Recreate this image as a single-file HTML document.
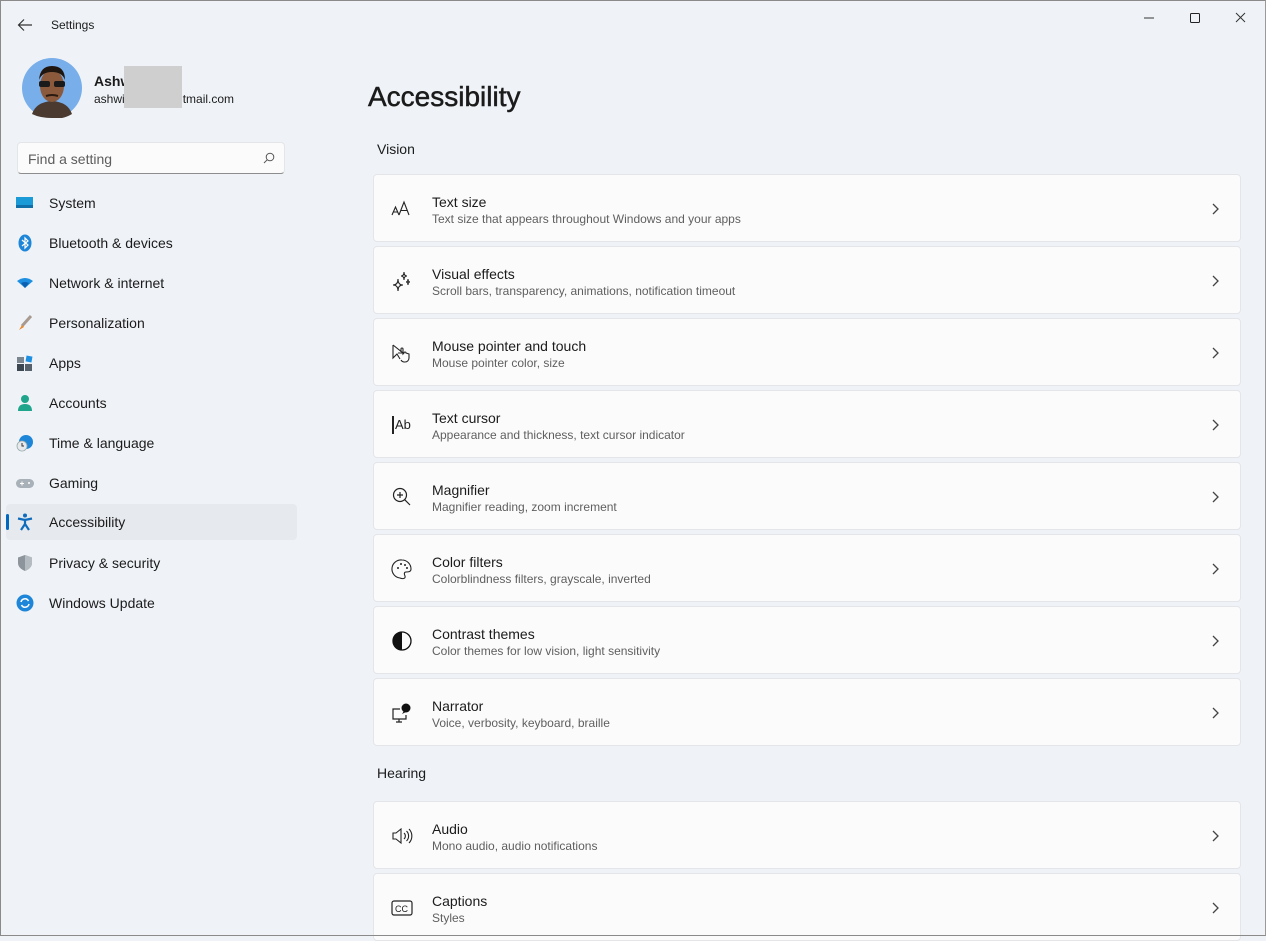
<!DOCTYPE html>
<html><head><meta charset="utf-8"><style>
*{margin:0;padding:0;box-sizing:border-box}
body{width:1266px;height:936px;overflow:hidden;background:#eff3f7;font-family:"Liberation Sans",sans-serif;color:#1b1b1b;position:relative}
.frame{position:absolute;inset:0;border:1px solid #8a8a8a;border-right-color:#9a9a9a;pointer-events:none}
.abs{position:absolute}
.nav{position:absolute;left:6px;width:291px;height:36px;display:flex;align-items:center;font-size:14px;color:#1b1b1b}
.nav .ic{position:absolute;left:10px;top:9px;width:18px;height:18px}
.nav span.t{position:absolute;left:43px}
.sel{background:#e6e9ed;border-radius:4px}
.sel:before{content:"";position:absolute;left:0;top:10px;width:3px;height:16px;background:#0067c0;border-radius:2px}
.card{position:absolute;left:373px;width:868px;height:68px;background:#fbfbfc;border:1px solid #e3e5e8;border-radius:4px}
.card .ti{position:absolute;left:58px;top:19px;font-size:14px;color:#1b1b1b}
.card .su{position:absolute;left:58px;top:37px;font-size:12px;color:#5f5f5f}
.card .ic{position:absolute;left:17px;top:23px;width:22px;height:22px}
.card .ch{position:absolute;right:20px;top:28px;width:10px;height:12px}
.sec{position:absolute;left:377px;font-size:14px;color:#1b1b1b}
</style></head><body>
<svg class="abs" style="left:17px;top:18px" width="16" height="14" viewBox="0 0 16 14"><path d="M15 7H2M7 1.5L1.5 7 7 12.5" fill="none" stroke="#333" stroke-width="1.2"/></svg>
<div class="abs" style="left:51px;top:18px;font-size:12px">Settings</div>
<svg class="abs" style="left:1143px;top:10px" width="110" height="16" viewBox="0 0 110 16"><path d="M1 8h10" stroke="#333" stroke-width="1"/><rect x="47.5" y="3.5" width="9" height="9" rx="1" fill="none" stroke="#222" stroke-width="1"/><path d="M93 3l9 9M102 3l-9 9" stroke="#333" stroke-width="1"/></svg>
<svg class="abs" style="left:22px;top:58px" width="60" height="60" viewBox="0 0 60 60"><circle cx="30" cy="30" r="30" fill="#78aeea"/><path d="M10 56 Q14 44 30 43 Q46 44 50 56 Q40 62 30 60 Q18 60 10 56Z" fill="#4a3a30"/><ellipse cx="30" cy="28" rx="12" ry="16" fill="#8b5a3c"/><path d="M17 22 Q18 8 30 8 Q43 8 43 22 Q40 14 30 14 Q20 14 17 22Z" fill="#1f1610"/><rect x="17" y="23" width="11" height="6" rx="2" fill="#1a1a1a"/><rect x="32" y="23" width="11" height="6" rx="2" fill="#1a1a1a"/><path d="M24 38 Q30 36 36 38" stroke="#2a1a10" stroke-width="2" fill="none"/></svg>
<div class="abs" style="left:94px;top:73px;font-size:14px;font-weight:bold">Ashw</div>
<div class="abs" style="left:94px;top:92px;font-size:12px">ashwi<span style="display:inline-block;width:58px"></span>tmail.com</div>
<div class="abs" style="left:124px;top:66px;width:58px;height:42px;background:#cfcfcf"></div>
<div class="abs" style="left:17px;top:142px;width:268px;height:32px;background:#fbfbfc;border:1px solid #e3e5e8;border-bottom:1px solid #8d8d8d;border-radius:4px"><span style="position:absolute;left:10px;top:8px;font-size:14px;color:#5d5d5d">Find a setting</span><svg style="position:absolute;right:9px;top:9px" width="12" height="12" viewBox="0 0 12 12"><circle cx="7" cy="5" r="3.8" fill="none" stroke="#555" stroke-width="1"/><path d="M4.3 7.7L1 11" stroke="#555"/></svg></div>

<div class="nav" style="top:185px"><svg class="ic" viewBox="0 0 18 18"><rect x="0" y="3" width="17" height="11" fill="#1a9ad6"/><rect x="0" y="11" width="17" height="3" fill="#0f6fa8"/></svg><span class="t">System</span></div>
<div class="nav" style="top:225px"><svg class="ic" viewBox="0 0 18 18"><ellipse cx="9" cy="9" rx="6.5" ry="8.5" fill="#1e86d8"/><path d="M6 6l6 5-3 3V4l3 3-6 5" fill="none" stroke="#fff" stroke-width="1.2"/></svg><span class="t">Bluetooth &amp; devices</span></div>
<div class="nav" style="top:265px"><svg class="ic" viewBox="0 0 18 18"><path d="M1 7 Q9 1 17 7 L9 14Z" fill="#1e8fe0"/><path d="M5 9 Q9 7 13 9 L9 14Z" fill="#0b5fb0"/></svg><span class="t">Network &amp; internet</span></div>
<div class="nav" style="top:305px"><svg class="ic" viewBox="0 0 18 18"><path d="M15 2L6 12" stroke="#a89a90" stroke-width="3"/><path d="M6 11 L3 16 L8 13Z" fill="#e8892a"/></svg><span class="t">Personalization</span></div>
<div class="nav" style="top:345px"><svg class="ic" viewBox="0 0 18 18"><rect x="1" y="3" width="7" height="6" fill="#7a8590"/><rect x="1" y="10" width="7" height="7" fill="#3c4650"/><rect x="9" y="10" width="7" height="7" fill="#56616b"/><rect x="10" y="2" width="6" height="6" fill="#1e8fe0" transform="rotate(10 13 5)"/></svg><span class="t">Apps</span></div>
<div class="nav" style="top:385px"><svg class="ic" viewBox="0 0 18 18"><circle cx="9" cy="5" r="4" fill="#1fa58c"/><path d="M2 17 Q2 10 9 10 Q16 10 16 17Z" fill="#1fa58c"/></svg><span class="t">Accounts</span></div>
<div class="nav" style="top:425px"><svg class="ic" viewBox="0 0 18 18"><circle cx="10" cy="8" r="7" fill="#1e86d8"/><circle cx="6" cy="12" r="5" fill="#e7eaed" stroke="#9aa" stroke-width=".8"/><path d="M6 9v3h2" stroke="#333" fill="none"/></svg><span class="t">Time &amp; language</span></div>
<div class="nav" style="top:465px"><svg class="ic" viewBox="0 0 18 18"><rect x="0" y="5" width="18" height="9" rx="4.5" fill="#a8b0b8"/><path d="M4 9.5h4M6 7.5v4" stroke="#fff"/><circle cx="13" cy="9" r="1" fill="#fff"/></svg><span class="t">Gaming</span></div>
<div class="nav sel" style="top:504px"><svg class="ic" viewBox="0 0 18 18"><circle cx="9" cy="2.5" r="2" fill="#0f6cbd"/><path d="M2 5.5L9 7l7-1.5M9 7v4l-4 6M9 11l4 6" fill="none" stroke="#0f6cbd" stroke-width="2.2"/></svg><span class="t">Accessibility</span></div>
<div class="nav" style="top:545px"><svg class="ic" viewBox="0 0 18 18"><path d="M9 1 L16 3.5 V9 Q16 14 9 17 Q2 14 2 9 V3.5Z" fill="#8d949b"/><path d="M9 1 L16 3.5 V9 Q16 14 9 17Z" fill="#b4bbc1"/></svg><span class="t">Privacy &amp; security</span></div>
<div class="nav" style="top:585px"><svg class="ic" viewBox="0 0 18 18"><circle cx="9" cy="9" r="8.5" fill="#1e86d8"/><path d="M5 8 A4 4 0 0 1 12.5 7M13 10 A4 4 0 0 1 5.5 11" fill="none" stroke="#fff" stroke-width="1.5"/></svg><span class="t">Windows Update</span></div>

<div class="abs" style="left:368px;top:81px;font-size:28px;font-weight:normal;-webkit-text-stroke:0.5px #1b1b1b">Accessibility</div>
<div class="sec" style="top:141px">Vision</div>

<div class="card" style="top:174px"><svg class="ic" viewBox="0 0 22 22"><path d="M1 17l3.5-8 3.5 8M2.3 14h4.4M8 17l5-13 5 13M9.8 12.5h6.4" fill="none" stroke="#222" stroke-width="1.1"/></svg><div class="ti">Text size</div><div class="su">Text size that appears throughout Windows and your apps</div><svg class="ch" viewBox="0 0 10 12"><path d="M3 1l5 5-5 5" fill="none" stroke="#444" stroke-width="1.3"/></svg></div>
<div class="card" style="top:246px"><svg class="ic" viewBox="0 0 22 22"><path d="M7 9 Q7 15 2 15 Q7 15 7 21 Q7 15 12 15 Q7 15 7 9Z M13 2 Q13 6 10 6 Q13 6 13 10 Q13 6 16 6 Q13 6 13 2Z M17 9 Q17 12 15 12 Q17 12 17 15 Q17 12 19 12 Q17 12 17 9Z" fill="none" stroke="#222" stroke-width="1.1"/></svg><div class="ti">Visual effects</div><div class="su">Scroll bars, transparency, animations, notification timeout</div><svg class="ch" viewBox="0 0 10 12"><path d="M3 1l5 5-5 5" fill="none" stroke="#444" stroke-width="1.3"/></svg></div>
<div class="card" style="top:318px"><svg class="ic" viewBox="0 0 22 22"><path d="M2 3v13l4-4 3 5M2 3l10 8H7" fill="none" stroke="#222" stroke-width="1.1"/><path d="M10 10v-3a1 1 0 0 1 2 0v5l1-1a1 1 0 0 1 2 0l3 1v4a4 4 0 0 1-4 4h-1a4 4 0 0 1-3-2" fill="none" stroke="#222" stroke-width="1.1"/></svg><div class="ti">Mouse pointer and touch</div><div class="su">Mouse pointer color, size</div><svg class="ch" viewBox="0 0 10 12"><path d="M3 1l5 5-5 5" fill="none" stroke="#444" stroke-width="1.3"/></svg></div>
<div class="card" style="top:390px"><svg class="ic" viewBox="0 0 22 22"><path d="M2 2v18" stroke="#222" stroke-width="2"/><text x="4" y="15" font-size="13" font-family="Liberation Sans" fill="#222">Ab</text></svg><div class="ti">Text cursor</div><div class="su">Appearance and thickness, text cursor indicator</div><svg class="ch" viewBox="0 0 10 12"><path d="M3 1l5 5-5 5" fill="none" stroke="#444" stroke-width="1.3"/></svg></div>
<div class="card" style="top:462px"><svg class="ic" viewBox="0 0 22 22"><circle cx="9" cy="9" r="6.5" fill="none" stroke="#222" stroke-width="1.2"/><path d="M13.7 13.7L19 19M6 9h6M9 6v6" stroke="#222" stroke-width="1.2"/></svg><div class="ti">Magnifier</div><div class="su">Magnifier reading, zoom increment</div><svg class="ch" viewBox="0 0 10 12"><path d="M3 1l5 5-5 5" fill="none" stroke="#444" stroke-width="1.3"/></svg></div>
<div class="card" style="top:534px"><svg class="ic" viewBox="0 0 22 22"><path d="M11 2a9 9 0 0 1 9 9c0 3-3 3-5 3s-2 2-1 4c1 3-3 3-5 2A9 9 0 0 1 11 2Z" fill="none" stroke="#222" stroke-width="1.1"/><circle cx="7" cy="10" r="1" fill="#222"/><circle cx="10" cy="6" r="1" fill="#222"/><circle cx="14" cy="7" r="1" fill="#222"/><circle cx="16" cy="10" r="1" fill="#222"/></svg><div class="ti">Color filters</div><div class="su">Colorblindness filters, grayscale, inverted</div><svg class="ch" viewBox="0 0 10 12"><path d="M3 1l5 5-5 5" fill="none" stroke="#444" stroke-width="1.3"/></svg></div>
<div class="card" style="top:606px"><svg class="ic" viewBox="0 0 22 22"><circle cx="11" cy="11" r="9" fill="none" stroke="#111" stroke-width="1.3"/><path d="M11 2a9 9 0 0 0 0 18Z" fill="#111"/></svg><div class="ti">Contrast themes</div><div class="su">Color themes for low vision, light sensitivity</div><svg class="ch" viewBox="0 0 10 12"><path d="M3 1l5 5-5 5" fill="none" stroke="#444" stroke-width="1.3"/></svg></div>
<div class="card" style="top:678px"><svg class="ic" viewBox="0 0 22 22"><path d="M9 7H2v10h13v-4M8 17v3M5 20h6" fill="none" stroke="#222" stroke-width="1.2"/><circle cx="15" cy="6" r="4.5" fill="#111"/><path d="M13 9l-2 3 4-2" fill="#111"/></svg><div class="ti">Narrator</div><div class="su">Voice, verbosity, keyboard, braille</div><svg class="ch" viewBox="0 0 10 12"><path d="M3 1l5 5-5 5" fill="none" stroke="#444" stroke-width="1.3"/></svg></div>

<div class="sec" style="top:765px">Hearing</div>
<div class="card" style="top:801px"><svg class="ic" viewBox="0 0 22 22"><path d="M2 8h3l5-4v14l-5-4H2Z" fill="none" stroke="#222" stroke-width="1.1"/><path d="M13 8a4 4 0 0 1 0 6M15.5 6a7 7 0 0 1 0 10M18 4a10 10 0 0 1 0 14" fill="none" stroke="#222" stroke-width="1.1"/></svg><div class="ti">Audio</div><div class="su">Mono audio, audio notifications</div><svg class="ch" viewBox="0 0 10 12"><path d="M3 1l5 5-5 5" fill="none" stroke="#444" stroke-width="1.3"/></svg></div>
<div class="card" style="top:873px"><svg class="ic" viewBox="0 0 22 22"><rect x="1" y="4" width="20" height="14" rx="2" fill="none" stroke="#222" stroke-width="1.2"/><text x="4" y="15" font-size="9" font-family="Liberation Sans" fill="#222">CC</text></svg><div class="ti">Captions</div><div class="su">Styles</div><svg class="ch" viewBox="0 0 10 12"><path d="M3 1l5 5-5 5" fill="none" stroke="#444" stroke-width="1.3"/></svg></div>
<div class="frame"></div>
</body></html>
